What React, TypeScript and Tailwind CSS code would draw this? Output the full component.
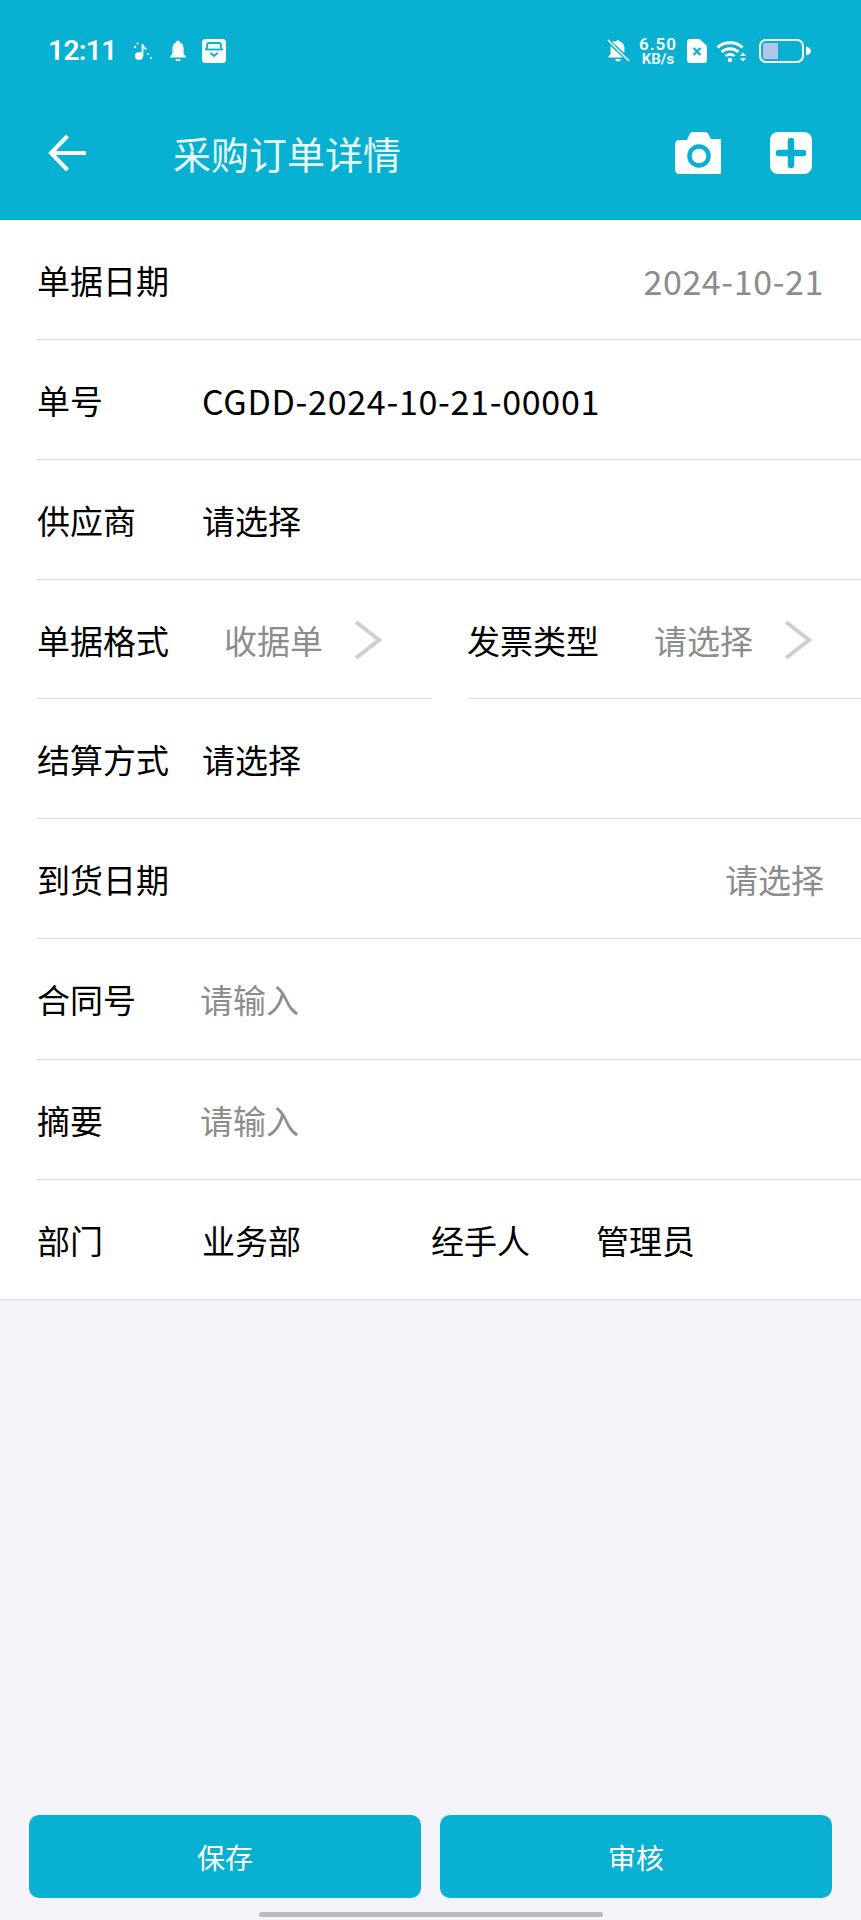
import { ReactNode } from 'react';

const CJK = "font-['Noto_Sans_CJK_SC','Noto_Sans',sans-serif]";

function Label({ children }: { children: string }) {
  return <span className="w-[165px] shrink-0 text-black">{children}</span>;
}

function Row({ children, last = false, tall = false }: { children: ReactNode; last?: boolean; tall?: boolean }) {
  if (last) {
    return (
      <div className="bg-white pl-[37px] border-b border-[#dcdcdc]">
        <div className="flex h-[119px] items-center pt-[2px]">{children}</div>
      </div>
    );
  }
  return (
    <div className="bg-white pl-[37px]">
      <div className={tall ? 'flex h-[121px] items-center border-b border-[#dcdcdc]' : 'flex h-[120px] items-center border-b border-[#dcdcdc] pt-[2px]'}>
        {children}
      </div>
    </div>
  );
}

function Chevron() {
  return (
    <svg width="28" height="40" viewBox="0 0 28 40" fill="none" stroke="#cfcfcf" strokeWidth="4" className="ml-[31px]">
      <path d="M2 2 L25 20 L2 38" />
    </svg>
  );
}

function BackArrow() {
  return (
    <svg width="38" height="38" viewBox="0 0 38 38" fill="none" stroke="white" strokeWidth="4">
      <path d="M3 19 L38 19" />
      <path d="M19.5 2 L3 19 L19.5 36" />
    </svg>
  );
}

function MusicIcon() {
  return (
    <svg width="20" height="20" viewBox="0 0 20 20" fill="white" className="ml-[16px]">
      <circle cx="6" cy="15" r="4" />
      <path d="M8.6 15 L8.6 3 L10.4 3 C10.8 6 13 6.5 14 8 L12.6 9 C12 8 11 7.6 10.4 7.2 L10.4 15 Z" />
      <circle cx="2" cy="6" r="1.2" />
      <circle cx="4.5" cy="2.5" r="1" />
      <circle cx="15" cy="13" r="1" />
      <circle cx="18" cy="17" r="1" />
    </svg>
  );
}

function BellIcon() {
  return (
    <svg width="18" height="22" viewBox="0 0 18 22" fill="white" className="ml-[16px]">
      <path d="M9 0.5 C10 0.5 10.6 1.3 10.6 2.3 C13.6 3.2 14.6 6 14.6 9 L14.6 14 L17 16.6 L17 17.5 L1 17.5 L1 16.6 L3.4 14 L3.4 9 C3.4 6 4.4 3.2 7.4 2.3 C7.4 1.3 8 0.5 9 0.5 Z" />
      <rect x="6.5" y="19" width="5" height="2" rx="1" />
    </svg>
  );
}

function CalendarBoxIcon() {
  return (
    <svg width="24" height="24" viewBox="0 0 24 24" className="ml-[15px]">
      <rect width="24" height="24" rx="3.5" fill="white" />
      <path d="M5 10 L5 6.5 C5 5 6 4 7.5 4 L16.5 4 C18 4 19 5 19 6.5 L19 10" fill="none" stroke="#08b0d2" strokeWidth="1.8" />
      <path d="M3 10.5 L21 10.5" stroke="#08b0d2" strokeWidth="1.8" />
      <path d="M8.5 14 L12 17 L15.5 14" fill="none" stroke="#08b0d2" strokeWidth="2" />
    </svg>
  );
}

function MutedBellIcon() {
  return (
    <svg width="23" height="24" viewBox="0 0 23 24" fill="white">
      <path d="M11 1 C12 1 12.6 1.8 12.6 2.6 C16 3.4 17.4 6.4 17.4 9.4 L17.4 14 L5 2.6 C6.4 2.4 8 2.4 9.4 2.6 C9.4 1.8 10 1 11 1 Z" />
      <path d="M3.6 7 L15.8 18.6 L1.5 18.6 L1.5 17.4 L3.6 15 Z" />
      <rect x="8.5" y="20" width="5" height="2.2" rx="1" />
      <path d="M1 1 L22 22" stroke="white" strokeWidth="1.6" />
    </svg>
  );
}

function SimIcon() {
  return (
    <svg width="20" height="24" viewBox="0 0 20 24" className="ml-[9px]">
      <path d="M3 0 L12.5 0 L20 7 L20 21 C20 22.8 18.8 24 17 24 L3 24 C1.2 24 0 22.8 0 21 L0 3 C0 1.2 1.2 0 3 0 Z" fill="white" />
      <path d="M6.5 9 L13.5 16 M13.5 9 L6.5 16" stroke="#08b0d2" strokeWidth="2.2" />
    </svg>
  );
}

function WifiIcon() {
  return (
    <svg width="30" height="23" viewBox="0 0 30 23" fill="none" stroke="white" className="ml-[9px]">
      <path d="M1.5 7.5 C8 1 20 1 26.5 7.5" strokeWidth="3" />
      <path d="M5.5 12 C10 7.5 18 7.5 22.5 12" strokeWidth="3" />
      <path d="M9.5 16 C12 13.8 16 13.8 18.5 16" strokeWidth="2.6" />
      <circle cx="14" cy="20" r="2.2" fill="white" stroke="none" />
      <path d="M24 16 L27 12.5 L30 16 Z M24 18 L30 18 L27 21.5 Z" fill="white" stroke="none" />
    </svg>
  );
}

function BatteryIcon() {
  return (
    <svg width="52" height="24" viewBox="0 0 52 24" className="ml-[13px]">
      <rect x="1" y="1" width="43" height="22" rx="6" fill="none" stroke="white" strokeWidth="2" />
      <path d="M6.5 4 L19 4 L19 20 L6.5 20 C5 20 4 19 4 17.5 L4 6.5 C4 5 5 4 6.5 4 Z" fill="#b4c5ea" />
      <path d="M47 7.5 C50 8.5 52 10 52 12 C52 14 50 15.5 47 16.5 Z" fill="white" />
    </svg>
  );
}

function CameraIcon() {
  return (
    <svg width="46" height="42" viewBox="0 0 46 42">
      <path d="M4 8 L12 8 L14.5 2.5 C15.2 1 16 0 18 0 L30 0 C32 0 33 1 33.6 2.5 L36 7 L46 7 L46 42 L4 42 C1.8 42 0 40.2 0 38 L0 12 C0 9.8 1.8 8 4 8 Z" fill="white" />
      <circle cx="24" cy="24" r="9.5" fill="none" stroke="#08b0d2" strokeWidth="4.5" />
    </svg>
  );
}

function PlusBoxIcon() {
  return (
    <svg width="42" height="42" viewBox="0 0 42 42" className="ml-[49px]">
      <rect width="42" height="42" rx="8" fill="white" />
      <path d="M21 9 L21 33 M9 21 L33 21" stroke="#08b0d2" strokeWidth="6.5" strokeLinecap="round" />
    </svg>
  );
}

export default function App() {
  return (
    <div className={`${CJK} flex min-h-[1920px] w-[861px] flex-col bg-[#f3f3f9] text-[33px] leading-none`}>
      <header className="h-[220px] bg-[#08b0d2] text-white">
        <div className="flex h-[102px] items-center pl-[48px] pr-[50px]">
          <span className="font-['Roboto',sans-serif] text-[28px] font-semibold tracking-[-0.6px]">12:11</span>
          <MusicIcon />
          <BellIcon />
          <CalendarBoxIcon />
          <div className="ml-auto flex items-center">
            <MutedBellIcon />
            <div className="ml-[8px] flex w-[40px] flex-col items-center font-['Roboto',sans-serif] font-semibold">
              <span className="text-[17px] leading-[16px] tracking-[1px]">6.50</span>
              <span className="text-[15px] leading-[15px]">KB/s</span>
            </div>
            <SimIcon />
            <WifiIcon />
            <BatteryIcon />
          </div>
        </div>
        <div className="flex h-[102px] items-center pl-[48px] pr-[49px]">
          <BackArrow />
          <span className="ml-[87px] text-[38px] text-[#e8fafd]">采购订单详情</span>
          <div className="ml-auto flex items-center">
            <CameraIcon />
            <PlusBoxIcon />
          </div>
        </div>
      </header>

      <Row>
        <Label>单据日期</Label>
        <span className="ml-auto pr-[37px] text-[34px] tracking-[0.6px] text-[#8c8c8c]">2024-10-21</span>
      </Row>
      <Row>
        <Label>单号</Label>
        <span className="text-[34px] tracking-[0.7px] text-black">CGDD-2024-10-21-00001</span>
      </Row>
      <Row>
        <Label>供应商</Label>
        <span className="text-black">请选择</span>
      </Row>

      <div className="flex bg-white pl-[37px]">
        <div className="flex h-[119px] w-[394px] items-center border-b border-[#dcdcdc] pt-[2px]">
          <span className="w-[187px] shrink-0 text-black">单据格式</span>
          <span className="text-[#8c8c8c]">收据单</span>
          <Chevron />
        </div>
        <div className="ml-[36px] flex h-[119px] flex-1 items-center border-b border-[#dcdcdc] pt-[2px]">
          <span className="w-[187px] shrink-0 text-black">发票类型</span>
          <span className="text-[#8c8c8c]">请选择</span>
          <Chevron />
        </div>
      </div>

      <Row>
        <Label>结算方式</Label>
        <span className="text-black">请选择</span>
      </Row>
      <Row>
        <Label>到货日期</Label>
        <span className="ml-auto pr-[37px] text-[#8c8c8c]">请选择</span>
      </Row>
      <Row tall>
        <span className="w-[163px] shrink-0 text-black">合同号</span>
        <span className="text-[#8c8c8c]">请输入</span>
      </Row>
      <Row>
        <span className="w-[163px] shrink-0 text-black">摘要</span>
        <span className="text-[#8c8c8c]">请输入</span>
      </Row>
      <Row last>
        <Label>部门</Label>
        <span className="w-[229px] shrink-0 text-black">业务部</span>
        <span className="w-[165px] shrink-0 text-black">经手人</span>
        <span className="text-black">管理员</span>
      </Row>

      <div className="mt-auto flex flex-col items-center">
        <div className="flex w-full gap-[19px] px-[29px]">
          <button className="flex h-[83px] flex-1 items-center justify-center rounded-[10px] bg-[#08b0d2] text-[28px] text-white">保存</button>
          <button className="flex h-[83px] flex-1 items-center justify-center rounded-[10px] bg-[#08b0d2] text-[28px] text-white">审核</button>
        </div>
        <div className="mb-[3px] mt-[14px] h-[5px] w-[344px] rounded-full bg-[#b9b9c0]" />
      </div>
    </div>
  );
}
